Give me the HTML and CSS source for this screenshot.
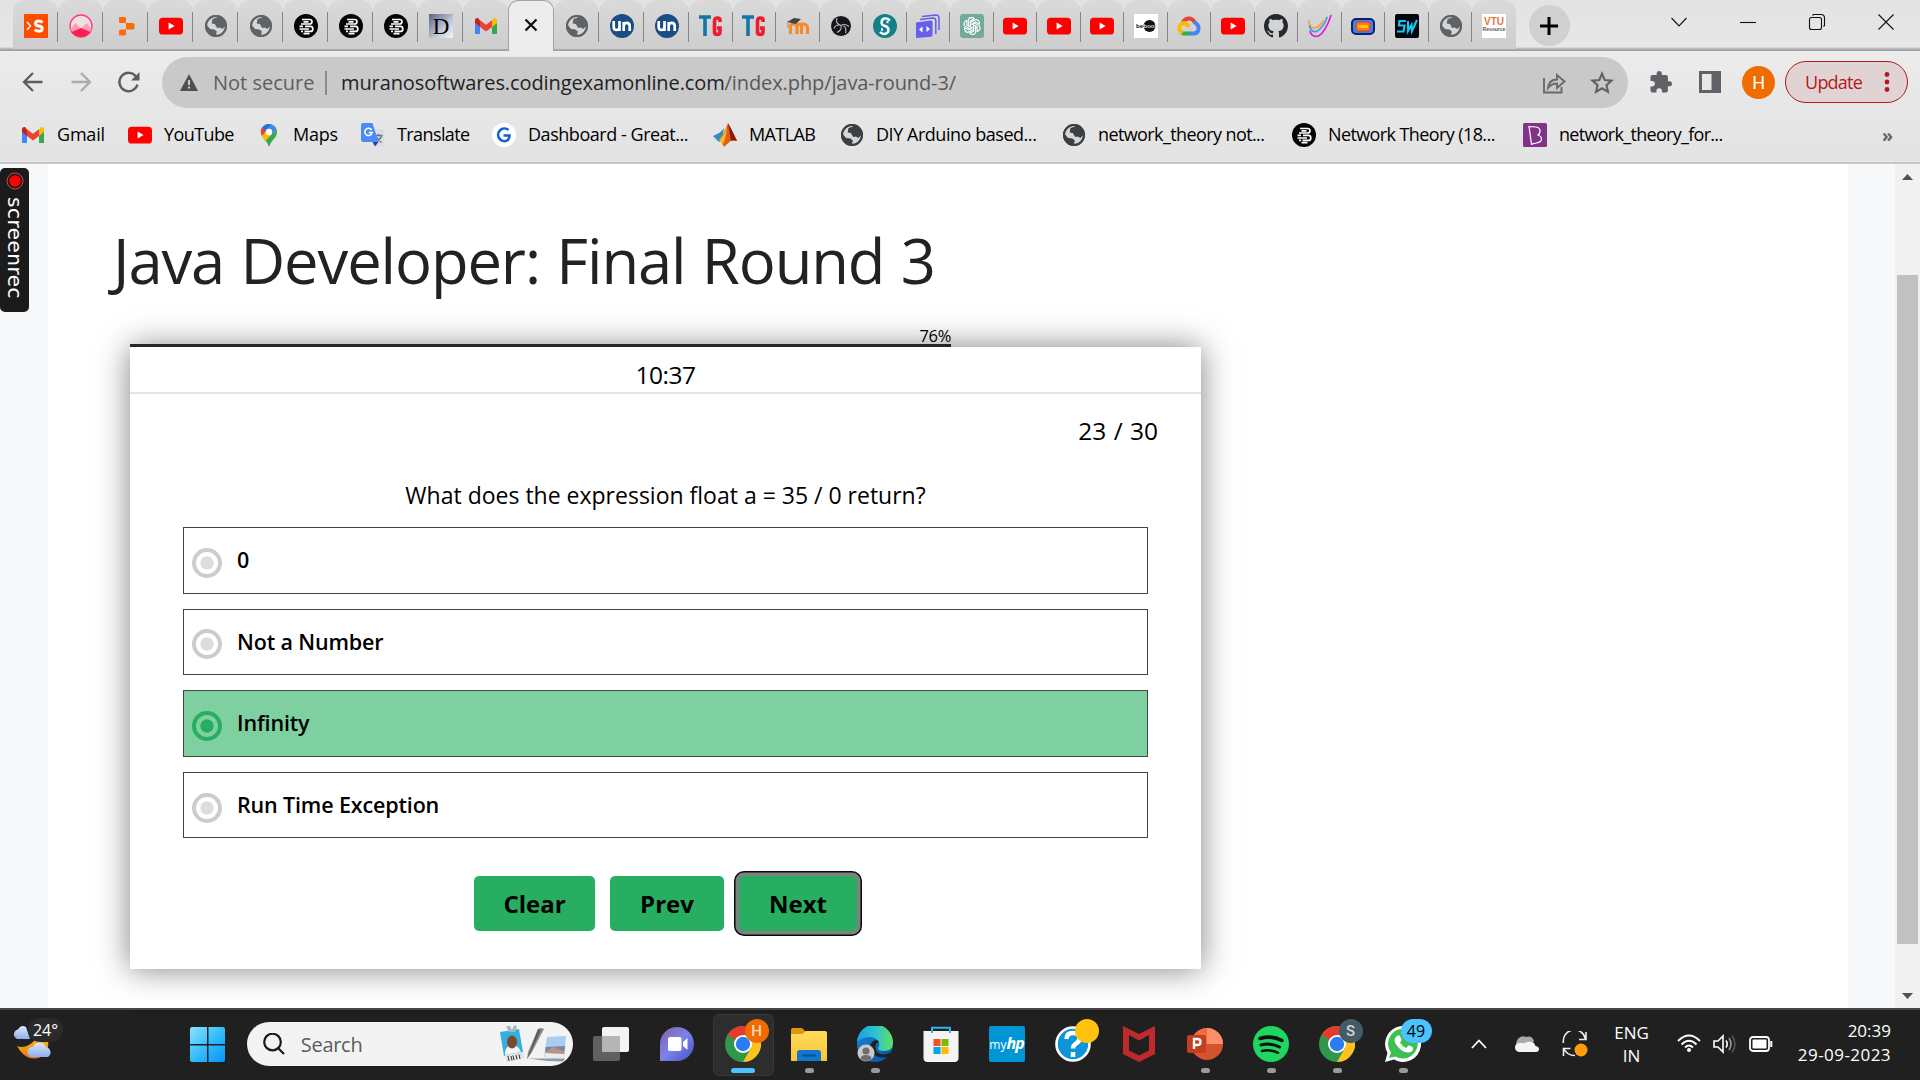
FILE: index.html
```html
<!DOCTYPE html>
<html lang="en">
<head>
<meta charset="utf-8">
<title>Java Developer: Final Round 3</title>
<link rel="stylesheet" href="styles.css">
</head>
<body>
<svg class="defs" aria-hidden="true">
  <defs>
    <linearGradient id="gWin" x1="0" y1="0" x2="1" y2="1"><stop offset="0" stop-color="#8be4ff"/><stop offset=".5" stop-color="#35bdfb"/><stop offset="1" stop-color="#0a93f8"/></linearGradient>
    <linearGradient id="gChat" x1="0" y1="0" x2="1" y2="1"><stop offset="0" stop-color="#8a5d9e"/><stop offset=".5" stop-color="#7b83eb"/><stop offset="1" stop-color="#4b4bc0"/></linearGradient>
    <linearGradient id="gFold" x1="0" y1="0" x2="0" y2="1"><stop offset="0" stop-color="#ffdb5c"/><stop offset="1" stop-color="#f8c436"/></linearGradient>
    <linearGradient id="gEdge" x1="0" y1="0" x2="1" y2="0"><stop offset="0" stop-color="#1b9de2"/><stop offset=".5" stop-color="#2cc4d4"/><stop offset="1" stop-color="#5fe05a"/></linearGradient>
    <linearGradient id="gEdge2" x1="0" y1="0" x2="1" y2="1"><stop offset="0" stop-color="#1689d8"/><stop offset="1" stop-color="#0c4da2"/></linearGradient>
    <linearGradient id="gMoon" x1="0" y1="0" x2="0" y2="1"><stop offset="0" stop-color="#fdb813"/><stop offset="1" stop-color="#e8730c"/></linearGradient>
    <linearGradient id="gCloud" x1="0" y1="0" x2="0" y2="1"><stop offset="0" stop-color="#dbe8fb"/><stop offset="1" stop-color="#8fb0ea"/></linearGradient>
    <linearGradient id="gD" x1="0" y1="0" x2="1" y2="1"><stop offset="0" stop-color="#5c6384"/><stop offset=".6" stop-color="#c3c8d6"/><stop offset="1" stop-color="#f4f5f8"/></linearGradient>
  </defs>
  <symbol id="yt" viewBox="0 0 24 24"><rect y="3.7" width="24" height="16.8" rx="3.6" fill="#f00"/><path d="M9.6 8.6v7l6-3.5z" fill="#fff"/></symbol>
  <symbol id="globe" viewBox="0 0 24 24"><circle cx="12" cy="12" r="11" fill="currentColor"/><path d="M13.2 3.2 9 5.5 8.2 9l3.3.6 1.7 2-.5 2.4 3.2-.6 2.4 1.6 2.6-2.4c.4 3.6-2 7.5-6.5 8.300l-2.600-.3 1.200-2.800-2.500-2.200-4.400-.6-3-3.500c-.2-4.400 3-8.600 8.200-9.200z" fill="#d6d6d6"/><path d="M8.500 5 13 4l2.500 2-1.200 2.700 3.300 1.900-1 2.600-4.300-.4-1.400-2.700-3.200-.5z" fill="currentColor"/><circle cx="12" cy="12" r="10" fill="none" stroke="currentColor" stroke-width="2"/></symbol>
  <symbol id="bars3" viewBox="0 0 24 24"><circle cx="12" cy="12" r="12" fill="#050505"/><path d="M8 5.500h7.500q2.500 0 2.500 2.200T15.500 10H7M9.500 7.800h5M11 12.400h5.500q2.300 0 2.300 2.500t-2.300 2.500H10.500M5.500 12.400H9M5.500 15H15M7 17.400H9M9.500 19.600h6" fill="none" stroke="#fff" stroke-width="1.700"/></symbol>
  <symbol id="gm" viewBox="0 0 24 24"><path d="M1 5.500V20h5v-9z" fill="#4285f4"/><path d="M23 5.500V20h-5v-9z" fill="#34a853"/><path d="M18 6.500 20 4q3-.5 3 3v2l-5 4z" fill="#fbbc04"/><path d="M6 6.500 4 4Q1 3.500 1 7v2l5 4z" fill="#c5221f"/><path d="M6 6.300v6.700l6 4.500 6-4.500V6.300l-6 4.500z" fill="#ea4335"/></symbol>
  <symbol id="un" viewBox="0 0 24 24"><circle cx="12" cy="12" r="12" fill="#1c4c86"/><path d="M3.700 7v6q0 3 2.900 3t2.900-3V7m0 6v4M13.700 17V8m0 4q0-3.200 3-3.200t3 3.200v5" fill="none" stroke="#fff" stroke-width="2.700"/></symbol>
  <symbol id="tg" viewBox="0 0 24 24"><path d="M0 3h12M6 3v19" stroke="#1475a8" stroke-width="3.600" fill="none"/><path d="M21 8V6q0-2-2.700-2T15.500 7v11q0 2.500 2.800 2.500T21 18v-4h-3" stroke="#ee1c2e" stroke-width="3.600" fill="none"/></symbol>
  <symbol id="chrome" viewBox="0 0 36 36"><circle cx="18" cy="18" r="18" fill="#31974b"/><path d="M18 18 2.400 9A18 18 0 0 1 33.600 9H18z" fill="#e33b2e"/><path d="M18 9h15.600A18 18 0 0 1 18 36l8-14z" fill="#fcc31e"/><path d="M2.400 9 10 22.500 18 18z" fill="#31974b"/><circle cx="18" cy="18" r="9" fill="#fff"/><circle cx="18" cy="18" r="7.200" fill="#2c7cf0"/></symbol>
</svg>

<header class="browser">
  <div class="tabstrip">
    <div class="tab"><svg class="fav" viewBox="0 0 24 24"><rect width="24" height="24" fill="#ff4b00"/><path d="m3 8 3.500 4L3 16" fill="none" stroke="#fff" stroke-width="1.500"/><path d="M18.500 8.500Q17 7 14.500 7t-3 2.400q0 2 3.300 2.500 3.500.6 3.500 2.800T15 17.300q-2.500 0-4.200-1.600" fill="none" stroke="#fff" stroke-width="3"/></svg></div>
    <div class="tab"><svg class="fav" viewBox="0 0 24 24"><circle cx="12" cy="12" r="11" fill="#f3dde3" stroke="#ff3d74" stroke-width="1.300"/><path d="m1.500 15 5-6 5.500 6 5.500-6 5 6-3 5.500h-15z" fill="#ff9db5"/><path d="M2.500 18 12 14l9.500 4A11.500 11.500 0 0 1 2.500 18z" fill="#ff1f55"/></svg></div>
    <div class="tab"><svg class="fav" viewBox="0 0 24 24"><path d="M5 3h5.500q1.500 0 1.500 1.500V9H6.500Q5 9 5 7.500zM12 9h7q1.500 0 1.500 1.500v3.500Q20.500 15.500 19 15.500h-7zM5 17q0-1.500 1.500-1.500H12V20q0 1.500-1.500 1.500H5z" fill="#fb6a0c"/></svg></div>
    <div class="tab"><svg class="fav"><use href="#yt"/></svg></div>
    <div class="tab"><svg class="fav grey"><use href="#globe"/></svg></div>
    <div class="tab"><svg class="fav grey"><use href="#globe"/></svg></div>
    <div class="tab"><svg class="fav"><use href="#bars3"/></svg></div>
    <div class="tab"><svg class="fav"><use href="#bars3"/></svg></div>
    <div class="tab"><svg class="fav"><use href="#bars3"/></svg></div>
    <div class="tab"><svg class="fav" viewBox="0 0 24 24"><rect width="24" height="24" fill="url(#gD)"/><text x="12" y="20" text-anchor="middle" class="serif-d">D</text></svg></div>
    <div class="tab last"><svg class="fav"><use href="#gm"/></svg></div>
    <div class="tab active"><svg class="fav" viewBox="0 0 24 24"><path d="m6.500 6.500 11 11m0-11-11 11" stroke="#111" stroke-width="2.300" fill="none"/></svg></div>
    <div class="tab"><svg class="fav grey"><use href="#globe"/></svg></div>
    <div class="tab"><svg class="fav"><use href="#un"/></svg></div>
    <div class="tab"><svg class="fav"><use href="#un"/></svg></div>
    <div class="tab slim"><svg class="fav"><use href="#tg"/></svg></div>
    <div class="tab slim"><svg class="fav"><use href="#tg"/></svg></div>
    <div class="tab slim"><svg class="fav" viewBox="0 0 24 24"><path d="M4.500 20v-7q0-3 3.300-3t3.200 3v7m0-7q0-3 5-3t5.500 3v7M15.500 20v-9" fill="none" stroke="#f58a2c" stroke-width="3.200"/><path d="m1 8 7-4 7 1-5 5z" fill="#444"/><path d="M2 8v6" stroke="#a88b6c"/></svg></div>
    <div class="tab slim"><svg class="fav" viewBox="0 0 24 24"><circle cx="12" cy="12" r="10.500" fill="#16161a" stroke="#dcdcdc"/><path d="M8 4q-2 5.500 4 7.500Q15.500 9 20 12.500M12 11.500q1 5-4 7M14.500 12q3.500 2 2 7M11 11q-4.500-.5-6 3.500" fill="none" stroke="#bbb" stroke-width="1.100"/></svg></div>
    <div class="tab slim"><svg class="fav" viewBox="0 0 24 24"><circle cx="12" cy="12" r="12" fill="#14808a"/><path d="M17 6.500Q14.500 4 11.500 4.500T8.500 9q0 2 3.500 3t3.500 4-3.500 4q-3 .3-5-2M13.500 8h2M8 15.500h2" fill="none" stroke="#fff" stroke-width="2.400"/></svg></div>
    <div class="tab slim"><svg class="fav" viewBox="0 0 24 24"><path d="M6 2.500 20 1q3 0 3 3v12M4 5.500 17 4q2.800 0 2.800 3v13" fill="none" stroke="#655ff0" stroke-width="1.500"/><path d="M0 8.500 15 6.500q1.500 0 1.500 1.500v13q0 1.500-1.500 1.700L0 24z" fill="#655ff0"/><path d="m6.500 12.500-3.500 3 3.500 3zm4-.5 3.500 3-3.500 3z" fill="#fff"/></svg></div>
    <div class="tab slim"><svg class="fav" viewBox="0 0 24 24"><rect width="24" height="24" rx="3" fill="#74aa9c"/><g fill="none" stroke="#fff" stroke-width="1.100"><path id="petal" d="M8.300 12.500V6.800q0-3.200 3.200-3.200 1.800 0 2.700 1.200L10.300 7v6"/><use href="#petal" transform="rotate(60 12 12)"/><use href="#petal" transform="rotate(120 12 12)"/><use href="#petal" transform="rotate(180 12 12)"/><use href="#petal" transform="rotate(240 12 12)"/><use href="#petal" transform="rotate(300 12 12)"/></g></svg></div>
    <div class="tab slim"><svg class="fav"><use href="#yt"/></svg></div>
    <div class="tab slim"><svg class="fav"><use href="#yt"/></svg></div>
    <div class="tab slim"><svg class="fav"><use href="#yt"/></svg></div>
    <div class="tab slim"><svg class="fav" viewBox="0 0 24 24"><rect width="24" height="24" fill="#fff"/><circle cx="15.500" cy="12" r="6" fill="#111"/><text x="2" y="14" class="bebo">be</text><text x="9.500" y="14" class="bebo light">book</text></svg></div>
    <div class="tab slim"><svg class="fav" viewBox="0 0 24 24"><g fill="none" stroke-width="4"><path d="M6 8.500Q8 4.500 12 4.500t6 4.500" stroke="#ea4335"/><path d="M17 8q5 2.500 4.500 7t-5 4.500H12" stroke="#4285f4"/><path d="M13 19.500H7.500q-2 0-3-1" stroke="#34a853"/><path d="M5.500 19q-4-2.500-3-6t5-4l5 3.500" stroke="#fbbc05"/></g></svg></div>
    <div class="tab slim"><svg class="fav"><use href="#yt"/></svg></div>
    <div class="tab slim"><svg class="fav" viewBox="0 0 16 16"><path fill="#24292f" d="M8 0C3.580 0 0 3.580 0 8c0 3.540 2.290 6.530 5.470 7.590.4.070.55-.17.55-.38 0-.19-.01-.82-.01-1.490-2.010.37-2.530-.49-2.690-.94-.09-.23-.48-.94-.82-1.130-.28-.15-.68-.52-.01-.53.63-.01 1.080.58 1.230.82.72 1.210 1.870.87 2.330.66.070-.52.28-.87.51-1.070-1.780-.2-3.640-.89-3.640-3.950 0-.87.31-1.590.82-2.150-.08-.2-.36-1.020.08-2.120 0 0 .67-.21 2.200.82.64-.18 1.320-.27 2-.27s1.360.09 2 .27c1.530-1.040 2.200-.82 2.200-.82.44 1.100.16 1.920.08 2.120.51.56.82 1.270.82 2.150 0 3.070-1.870 3.750-3.650 3.950.29.25.54.73.54 1.480 0 1.070-.01 1.930-.01 2.200 0 .21.15.46.55.38A8.010 8.010 0 0 0 16 8c0-4.420-3.580-8-8-8z"/></svg></div>
    <div class="tab slim"><svg class="fav" viewBox="0 0 24 24"><g fill="none" stroke-width="1.700" stroke-linecap="round"><path d="M1 7q0 7 5 7t9-7" stroke="#f5a623"/><path d="M1.500 12q1.500 6.500 7 5.500Q14.500 15 19 3.500" stroke="#3d9be9"/><path d="M2 17.500q2 6 8.500 4.500Q17.500 18 23 1.500" stroke="#e31bd6"/></g></svg></div>
    <div class="tab slim"><svg class="fav" viewBox="0 0 24 24"><rect x="1" y="5" width="22" height="15" rx="4" fill="#3b82f6" stroke="#0b2265" stroke-width="2"/><rect x="5" y="8" width="14" height="9" rx="2.500" fill="#ff7a1a" stroke="#ee3a10"/><path d="M7 12.500h10" stroke="#fdc60a" stroke-width="3"/></svg></div>
    <div class="tab slim"><svg class="fav" viewBox="0 0 24 24"><rect width="24" height="24" rx="2" fill="#050510"/><path d="M11 7H4.500L4 11.500h5.500L8.500 17.500H2M13 7v10l3.500-6 .5 6 5-11" fill="none" stroke="#12c8ec" stroke-width="2.200"/></svg></div>
    <div class="tab slim"><svg class="fav grey"><use href="#globe"/></svg></div>
    <div class="tab slim last"><svg class="fav" viewBox="0 0 24 24"><rect width="24" height="24" fill="#fff"/><text x="12" y="11" text-anchor="middle" class="vtu">VTU</text><text x="12" y="16.500" text-anchor="middle" class="vtu-sub">Resource</text></svg></div>
    <div class="newtab"><svg viewBox="0 0 24 24"><path d="M12 3v18M3 12h18" stroke="#000" stroke-width="3"/></svg></div>
    <div class="winctl">
      <svg viewBox="0 0 16 16"><path d="m.5 4 7.500 8 7.500-8"/></svg>
      <svg viewBox="0 0 16 16"><path d="M0 8.500h16"/></svg>
      <svg viewBox="0 0 16 16"><rect x=".5" y="3.500" width="12" height="12" rx="2"/><path d="M3.500 1.500 4.500.5H12q3.500 0 3.500 3.500v7.500l-1 1"/></svg>
      <svg viewBox="0 0 16 16"><path d="m.5.5 15 15m0-15-15 15"/></svg>
    </div>
  </div>

  <div class="toolbar">
    <svg class="nav" viewBox="0 0 24 24"><path d="M21.500 12H3m9-9-9 9 9 9" fill="none" stroke="#5a5e62" stroke-width="2.300"/></svg>
    <svg class="nav" viewBox="0 0 24 24"><path d="M2.500 12H21m-9-9 9 9-9 9" fill="none" stroke="#a9abad" stroke-width="2.300"/></svg>
    <svg class="nav" viewBox="0 0 24 24"><path d="M20.500 14.500A9.200 9.200 0 1 1 19 6.500" fill="none" stroke="#5a5e62" stroke-width="2.400"/><path d="M22.500 2v8.500H14z" fill="#5a5e62"/></svg>
    <div class="omnibox">
      <svg class="warn" viewBox="0 0 18 17"><path d="M9 0 18 17H0z" fill="#4c4f53"/><path d="M9 6v5m0 1.500v2" stroke="#ccc" stroke-width="2"/></svg>
      <span class="insecure">Not secure</span>
      <span class="url">muranosoftwares.codingexamonline.com<span class="path">/index.php/java-round-3/</span></span>
      <svg class="share" viewBox="0 0 24 24"><g fill="none" stroke="#66696d" stroke-width="1.900"><path d="M2 7v14.500h17.500V16"/><path d="M6 17q1-8.500 9-8.500V4l7.500 6.500-7.500 6.500v-4.500Q9.500 12.500 6 17z"/></g></svg>
      <svg class="star" viewBox="0 0 24 24"><path d="m12 3.500 2.500 5.700 6.300.6-4.700 4.200 1.400 6.200-5.500-3.300-5.500 3.300 1.400-6.200-4.700-4.200 6.300-.6z" fill="none" stroke="#5f6368" stroke-width="2"/></svg>
    </div>
    <svg class="puzzle" viewBox="1.500 1 21.500 21.500"><path fill="#5f6368" d="M20.500 11H19V7c0-1.100-.9-2-2-2h-4V3.500a2.500 2.500 0 0 0-5 0V5H4c-1.100 0-2 .9-2 2v3.800h1.500a2.700 2.700 0 0 1 0 5.400H2V20c0 1.100.9 2 2 2h3.800v-1.500a2.700 2.700 0 0 1 5.400 0V22H17c1.100 0 2-.9 2-2v-4h1.500a2.500 2.500 0 0 0 0-5z"/></svg>
    <svg class="panel" viewBox="0 0 22 22"><path d="M0 0h22v22H0zM3 3v16h9.500V3z" fill="#5f6368" fill-rule="evenodd"/></svg>
    <span class="avatar">H</span>
    <div class="update"><span>Update</span><svg viewBox="0 0 6 20"><circle cx="3" cy="2.500" r="2.400"/><circle cx="3" cy="10" r="2.400"/><circle cx="3" cy="17.500" r="2.400"/></svg></div>
  </div>

  <nav class="bookmarks">
    <a><svg><use href="#gm"/></svg><span>Gmail</span></a>
    <a><svg><use href="#yt"/></svg><span class="tight">YouTube</span></a>
    <a><svg viewBox="0 0 24 24"><path d="M4 9a8 8 0 0 1 16 0q0 4-4 8-3 3-4 7-1-4-4-7-4-4-4-8z" fill="#34a853"/><path d="M5 5a8 8 0 0 1 9.500-3.600L8 9z" fill="#1a73e8"/><path d="M5 4.500 9 8 5 13Q2.500 8 5 4.500z" fill="#ea4335"/><path d="M14.500 1.400Q18 2.500 19.500 6L8 18.500 5 13z" fill="#fbbc04"/><path d="M14.500 1.400Q18 2.500 19.300 6L15 11 9 6.500z" fill="#4285f4"/><circle cx="12" cy="9" r="3.200" fill="#fff"/></svg><span>Maps</span></a>
    <a><svg viewBox="0 0 24 24"><path d="M9 6h12q2 0 2 2v14q0 1.500-2 1.500h-8z" fill="#d9dce0"/><path d="M13.500 12.500h8m-4-1.500v1.500m3 0q-1 4-6 6.500m1-5q2 3.500 5 5.500" fill="none" stroke="#5f7a8a" stroke-width="1.400"/><path d="M2 0h9.500l6 19H2q-2 0-2-2V2q0-2 2-2z" fill="#4c8bf5"/><path d="M11.500 19h6L14 23.500z" fill="#2a3fa8"/><path d="M10.500 7A3.600 3.600 0 1 0 11 9.500H7.800" fill="none" stroke="#fff" stroke-width="1.600"/></svg><span class="tight">Translate</span></a>
    <a><svg viewBox="0 0 24 24"><circle cx="12" cy="12" r="12" fill="#fff"/><path d="M16.500 7A6.300 6.300 0 1 0 16 17q1.500-2 1.500-4.500h-6" fill="none" stroke="#145fd7" stroke-width="2.600"/></svg><span class="snug">Dashboard - Great...</span></a>
    <a><svg viewBox="0 0 24 24"><path d="m0 13 6-3q3-2 5-5l-2 12-3 2z" fill="#2f8fc0"/><path d="M6 17q5-6 9-17 5 9 9 18-4-1-6 0t-7 6l-2-4z" fill="#e0600c"/><path d="M15 0q5 9 9 18-4-1.500-6 0Z" fill="#8c1a10"/><path d="M6 17q4-3 8-13-1 11-4 17z" fill="#fbb62c"/></svg><span class="tight">MATLAB</span></a>
    <a><svg class="dark"><use href="#globe"/></svg><span class="snug">DIY Arduino based...</span></a>
    <a><svg class="dark"><use href="#globe"/></svg><span class="tight">network_theory not...</span></a>
    <a><svg><use href="#bars3"/></svg><span class="tight">Network Theory (18...</span></a>
    <a><svg viewBox="0 0 24 24"><rect width="24" height="24" rx="1.500" fill="#813388"/><path d="M6 3.500 13 4q4 .5 4 4t-2.500 4q4 1 4 4t-5 4l-5 1.200zL8.500 21" fill="none" stroke="#fff" stroke-width="1.200"/></svg><span class="tightest">network_theory_for...</span></a>
    <b class="more">»</b>
  </nav>
</header>

<main class="viewport">
  <aside class="gutter">
    <div class="recorder"><svg viewBox="0 0 18 22"><circle cx="9" cy="11" r="8" fill="none" stroke="#e04040"/><circle cx="9" cy="11" r="5.700" fill="#f00"/></svg><span>screenrec</span></div>
  </aside>
  <section class="page">
    <h1>Java Developer: Final Round 3</h1>
    <div class="quiz">
      <div class="progress" style="width:821px"><span>76%</span></div>
      <div class="timer">10:37</div>
      <div class="count">23 / 30</div>
      <p class="question">What does the expression float a = 35 / 0 return?</p>
      <ul class="options">
        <li><i></i><span>0</span></li>
        <li><i></i><span>Not a Number</span></li>
        <li class="picked"><i></i><span>Infinity</span></li>
        <li><i></i><span>Run Time Exception</span></li>
      </ul>
      <div class="actions">
        <button class="clear">Clear</button><button class="prev">Prev</button><button class="next">Next</button>
      </div>
    </div>
  </section>
  <aside class="gutter right"></aside>
  <div class="scrollbar"><svg viewBox="0 0 11 6"><path d="M5.500 0 11 6H0z"/></svg><div class="thumb"></div><svg viewBox="0 0 11 6"><path d="M0 0h11L5.500 6z"/></svg></div>
</main>

<footer class="taskbar">
  <div class="weather">
    <svg viewBox="0 0 38 42"><path d="M3 17a5 5 0 0 1 1-9.500Q7 2 12 5l4 12z" fill="url(#gCloud)"/><path d="M3 24q9 4 19-7h12q2 12-7 18-15 6-24-11z" fill="url(#gMoon)"/><path d="M18 35a5 5 0 0 1 1-10 7 7 0 0 1 13 0 5.500 5.500 0 0 1 2 10z" fill="url(#gCloud)"/></svg>
    <span>24°</span>
  </div>
  <svg class="start" viewBox="0 0 35 35"><path d="M2 0h15v17H0V2q0-2 2-2zM18.500 0H33q2 0 2 2v15H18.500zM0 18.500h17V35H2q-2 0-2-2zM18.500 18.500H35V33q0 2-2 2H18.500z" fill="url(#gWin)"/></svg>
  <div class="search">
    <svg class="lens" viewBox="0 0 22 22"><circle cx="9.500" cy="9" r="8.300"/><path d="m15.500 15.500 5.500 5.500"/></svg>
    <span>Search</span>
    <svg class="art" viewBox="0 0 66 38"><path d="m0 7 19-3 4 23-19 4z" fill="#35aee0"/><path d="M9 7 6 1h4l2 4 2-5 3 1-2 6z" fill="#9dbac6"/><path d="M5 27q1-6 7-6.500t8 4.500l1 2-16 3z" fill="#f4f4f4"/><ellipse cx="12" cy="17" rx="5" ry="6.500" fill="#7a4a2c"/><path d="m5 30 18-3 1 6-18 4z" fill="#dde4ea"/><path d="m8 31 1 5m2-5 1 4.500m1-5 1 4.500m2-5 1 4.500m2-5 1 4.500" stroke="#333"/><path d="m28 27 10-23q3-2 6 0L32 27l-5 7z" fill="#8b9095"/><path d="m38 4 3 1-11 24-3 5z" fill="#5a5e62"/><path d="M28 33.500h37l-2 3q-18 0-35-3z" fill="#8f98ac"/><path d="m47 12 19-1-2 22-20-1z" fill="#a8cdf0"/><path d="m45.500 22 19.500-1-.8 8-19-1z" fill="#7387ae"/><path d="m45 27 8-5 11 4v4l-19-1z" fill="#b99183"/><path d="m45 28 19 1-.3 4-19-1z" fill="#e8edf4"/></svg>
  </div>
  <div class="apps">
    <div class="app"><svg viewBox="0 0 36 36"><rect y="10" width="27" height="25" rx="2" fill="#606060"/><rect x="9" y="1" width="27" height="25" rx="2" fill="#f4f4f4"/><path d="M9 10h18v16H11q-2 0-2-2z" fill="#b5b5b5"/></svg></div>
    <div class="app"><svg viewBox="0 0 36 36"><path d="M1 35V18a17 17 0 1 1 17 17z" fill="url(#gChat)"/><rect x="9" y="11" width="13.500" height="14" rx="2" fill="#fff"/><path d="m24 16 4.500-4v12L24 20z" fill="#fff"/></svg></div>
    <div class="app current"><svg><use href="#chrome"/></svg><em class="badge h">H</em></div>
    <div class="app open"><svg viewBox="0 0 36 36"><path d="M0 4q0-2 2-2h9l4 4v4H0z" fill="#dd9a08"/><path d="M0 8h11l4-3h19q2 0 2 2v28H0z" fill="url(#gFold)"/><path d="M6 35v-8q0-3 3-3h18q3 0 3 3v8z" fill="#1277cf"/><path d="M11 29.500h14" stroke="#0b4b93" stroke-width="2"/></svg></div>
    <div class="app open"><svg viewBox="0 0 36 36"><circle cx="18" cy="18" r="18" fill="url(#gEdge2)"/><path d="M0 16A18 18 0 0 1 36 17q0 8-9 8-6 0-6-3 2-2 1-5-2-6-9-6-8 0-13 5z" fill="url(#gEdge)"/><path d="M22 16q-5 2-3 8 3 7 14 3l2-1-1 4q-8 3-15 0-6-3-6-9 1-7 7-7z" fill="#202020"/><circle cx="9" cy="27" r="8.500" fill="#c9c9c9"/><circle cx="9" cy="25" r="3.600" fill="#6e6e6e"/><path d="M3.500 33q0-4 5.500-4t5.500 4q-5 4-11 0z" fill="#6e6e6e"/></svg></div>
    <div class="app"><svg viewBox="0 0 36 36"><path d="M.5 5h35v27q0 4-4 4h-27q-4 0-4-4z" fill="#f4f4f4"/><path d="M9 7V1.800h18V7" fill="none" stroke="#2bb4f4" stroke-width="2"/><path d="M10.500 13h7v7h-7z" fill="#f25022"/><path d="M18.500 13h7v7h-7z" fill="#7fba00"/><path d="M10.500 21h7v7h-7z" fill="#00a4ef"/><path d="M18.500 21h7v7h-7z" fill="#ffb900"/></svg></div>
    <div class="app"><span class="myhp">my<b>hp</b></span></div>
    <div class="app"><svg viewBox="0 0 36 36"><circle cx="18" cy="18" r="16.500" fill="#0c96d8" stroke="#fff" stroke-width="2.600"/><path d="M11.500 13q0-6 6.500-6t6.500 5.500q0 3-3.500 5-3 2-3 5M18 26v5" fill="none" stroke="#fff" stroke-width="4.500"/></svg><em class="badge dot"></em></div>
    <div class="app"><svg viewBox="0 0 36 36"><path d="M2 0 18 8 34 0v28L18 36 2 28zM8 9v15.500l10 5 10-5V9l-10 5.500z" fill="#c02a2c" fill-rule="evenodd"/></svg></div>
    <div class="app open"><svg viewBox="0 0 36 36"><circle cx="20" cy="18" r="16" fill="#d35230"/><path d="M20 2a16 16 0 0 1 16 16H20z" fill="#ff8f6b"/><path d="M20 2v16H4A16 16 0 0 1 20 2z" fill="#ed6c47"/><rect y="9" width="19" height="18" rx="2" fill="#c43e1c"/><path d="M7 23V13h3.500q3 0 3 3t-3 3H7" fill="none" stroke="#fff" stroke-width="2.400"/></svg></div>
    <div class="app open"><svg viewBox="0 0 36 36"><circle cx="18" cy="18" r="18" fill="#1ed760"/><g fill="none" stroke="#101010" stroke-linecap="round"><path d="M7 12.500q12-3.500 22 2" stroke-width="3.600"/><path d="M8 19q10-2.500 18.500 2" stroke-width="3"/><path d="M9 25q9-2 16 1.800" stroke-width="2.500"/></g></svg></div>
    <div class="app open"><svg><use href="#chrome"/></svg><em class="badge s">S</em></div>
    <div class="app open"><svg viewBox="0 0 36 36"><path d="M0 36 2.500 27A18 18 0 1 1 9 33.500z" fill="#fff"/><path d="M4 32 6 26.500A14.800 14.800 0 1 1 10.500 30.500z" fill="#3cc052"/><path d="M12 10q2-1.500 3 0l1.500 3.500q.3 1-1.500 3 2 3.700 6 5.500l2-2q.7-.8 1.600-.4l3.400 1.800q.7 4.600-4.500 5-5 0-9.500-4.500T9.500 14q.5-3 2.500-4z" fill="#fff"/></svg><em class="badge count49">49</em></div>
  </div>
  <div class="tray">
    <svg class="chev" viewBox="0 0 16 10"><path d="m1 9 7-7.500L15 9" fill="none" stroke="#fff" stroke-width="1.800"/></svg>
    <svg class="cloud" viewBox="0 0 24 16"><path d="M3 12A7 7 0 0 1 11 1q6-2 8 4l-6 9z" fill="#a9a9a9"/><path d="M4 16a4.500 4.500 0 0 1 1-9l5 0q3-2 7-1 3 1 3.500 4 3.500.5 3.500 3t-3 3z" fill="#f4f4f4"/></svg>
    <svg class="sync" viewBox="0 0 26 26"><g fill="none" stroke="#eee" stroke-width="1.600"><path d="M1.500 12A11 11 0 0 1 23.500 8M24 1v7.500h-7"/><path d="M1.500 25v-7.500h7M2 18q3 6.500 11 6.500"/></g><circle cx="19" cy="19" r="6.500" fill="#ff9d0a"/></svg>
    <div class="lang"><span>ENG</span><span>IN</span></div>
    <svg class="wifi" viewBox="0 0 24 18"><g fill="none" stroke="#fff" stroke-width="1.800"><path d="M1 7q11-11 22 0"/><path d="M4.500 10.500q7.500-7.500 15 0"/><path d="M8 13.500q4-4 8 0"/></g><circle cx="12" cy="16" r="2" fill="#fff"/></svg>
    <svg class="vol" viewBox="0 0 24 20"><path d="M1 7h4l5-5v16l-5-5H1z" fill="none" stroke="#fff" stroke-width="1.600"/><g fill="none" stroke-width="1.600"><path d="M13 6.500q2.500 3.500 0 7" stroke="#fff"/><path d="M16 4q4 6 0 12" stroke="#999"/><path d="M19 1.500q6 8.500 0 17" stroke="#555"/></g></svg>
    <svg class="batt" viewBox="0 0 24 16"><rect x="1" y="1" width="19" height="14" rx="3" fill="none" stroke="#fff" stroke-width="1.800"/><rect x="3.500" y="3.500" width="14" height="9" rx="1" fill="#fff"/><path d="M22.300 5v6" stroke="#fff" stroke-width="2"/></svg>
    <div class="clock"><span class="time">20:39</span><span class="date">29-09-2023</span></div>
  </div>
</footer>
</body>
</html>
```

FILE: styles.css
```css
* { box-sizing: border-box; }
body {
  margin: 0;
  width: 1920px;
  height: 1080px;
  overflow: hidden;
  display: flex;
  flex-direction: column;
  font-family: "Open Sans", "Noto Sans", sans-serif;
  color: #000;
}
svg { display: block; flex: none; }
span { white-space: nowrap; }
.defs { position: absolute; width: 0; height: 0; }

/* Browser chrome */
.browser { height: 164px; flex: none; background: #e6e6e6; border-bottom: 2px solid #c5c6c7; }
.tabstrip {
  display: flex;
  height: 51px;
  padding-left: 13px;
  background: linear-gradient(#e3e3e3, #e7e7e7 47px, #c8c8c8 48px, #a0a0a0 50px);
}
.tab {
  position: relative;
  width: 45px;
  height: 49px;
  padding-top: 14px;
  display: flex;
  justify-content: center;
  background: linear-gradient(#dadada, #cdcdcd);
  border-radius: 12px 12px 0 0;
}
.tab.slim { width: 43.530px; }
.tab:not(.last):not(.active)::after {
  content: "";
  position: absolute;
  right: -1px;
  top: 12px;
  width: 2px;
  height: 30px;
  background: #858585;
}
.tab.active {
  width: 46px;
  height: 51px;
  padding-top: 11.500px;
  background: #ededed;
  border: 1.500px solid #a3a3a3;
  border-bottom: 0;
  border-radius: 10px 10px 0 0;
}
.fav { width: 24px; height: 24px; }
.grey { color: #5f6368; }
.serif-d { font: 23px "Liberation Serif", serif; fill: #000; }
.bebo { font: bold 6px "Liberation Sans", sans-serif; fill: #111; }
.light { fill: #ddd; }
.vtu { font: bold 10px "Liberation Sans", sans-serif; fill: #e07b3c; }
.vtu-sub { font: bold 5px "Liberation Sans", sans-serif; fill: #555; }
.newtab {
  width: 41px;
  height: 41px;
  margin: 5px 0 0 13px;
  border-radius: 50%;
  background: #d0d0d0;
  display: flex;
  align-items: center;
  justify-content: center;
}
.newtab svg { width: 24px; height: 24px; }
.winctl { display: flex; gap: 53px; margin-left: 101px; padding-top: 14px; }
.winctl svg { width: 16px; height: 16px; fill: none; stroke: #111; stroke-width: 1.100; overflow: visible; }

.toolbar {
  height: 57px;
  padding: 6px 12px 0 21px;
  display: flex;
  align-items: center;
  background: linear-gradient(#ececec, #e6e6e6);
}
.nav { width: 24px; height: 24px; margin-right: 24px; }
.nav, .puzzle, .panel, .avatar, .update { margin-top: -1px; }
.omnibox {
  width: 1467px;
  height: 51px;
  margin-left: -3px;
  padding-left: 18px;
  border-radius: 26px;
  background: #c9c9c9;
  display: flex;
  align-items: center;
}
.warn { width: 18px; height: 17px; margin-right: 15px; }
.insecure { width: 114px; font-size: 20px; color: #5c5f63; border-right: 2px solid #8b8b8b; line-height: 24px; }
.url { margin-left: 14px; font-size: 20px; width: 1201px; color: #202124; letter-spacing: -.1px; }
.path { color: #56595d; }
.share { width: 24px; height: 24px; margin-right: 23px; }
.star { width: 26px; height: 26px; }
.puzzle { width: 22px; height: 22px; margin-left: 22px; }
.panel { width: 22px; height: 22px; margin-left: 27px; }
.avatar {
  width: 33px;
  height: 33px;
  margin-left: 21px;
  border-radius: 50%;
  background: #f06c00;
  color: #fff;
  font: 18px/33px Roboto, sans-serif;
  text-align: center;
}
.update {
  width: 123px;
  height: 42px;
  margin-left: 10px;
  padding: 0 17px 0 19px;
  border: 1.500px solid #b3191c;
  border-radius: 21px;
  background: #e1d3d3;
  color: #b3191c;
  font-size: 18px;
  letter-spacing: -.8px;
  display: flex;
  align-items: center;
  justify-content: space-between;
}
.update svg { width: 6px; height: 20px; fill: #b3191c; }
.bookmarks {
  height: 53px;
  padding-left: 21px;
  display: grid;
  grid-template-columns: 107px 129px 104px 131px 221px 127px 222px 230px 231px 339px auto;
  align-items: center;
  background: linear-gradient(#e7e7e7, #e3e3e3);
  font-size: 18px;
  letter-spacing: -.2px;
}
.bookmarks a { display: flex; align-items: center; gap: 12px; }
.bookmarks span { margin-top: -1px; }
.bookmarks svg { width: 24px; height: 24px; }
.snug { letter-spacing: -.46px; }
.tight { letter-spacing: -.6px; }
.tightest { letter-spacing: -.7px; }
.dark { color: #3c4043; }
.more { color: #5f6368; font-size: 18px; padding-left: 20px; }

/* Page */
.viewport { height: 844px; display: flex; background: #fff; }
.gutter { width: 48px; padding-top: 4px; background: #f7f8fa; }
.gutter.right { width: 47px; }
.recorder {
  width: 29px;
  height: 144px;
  padding-top: 1.500px;
  border-radius: 5px;
  background: #1b1b1b;
  color: #fff;
  display: flex;
  flex-direction: column;
  align-items: center;
}
.recorder svg { width: 18px; height: 22px; }
.recorder span { margin-top: 5px; writing-mode: vertical-rl; font: 20px/24px "DejaVu Sans", sans-serif; letter-spacing: .5px; }
.page { width: 1800px; padding: 52px 0 0 65px; }
h1 {
  margin: 0;
  font-size: 61.500px;
  line-height: 88px;
  font-weight: 400;
  color: #222;
  letter-spacing: -1.100px;
  word-spacing: 1.500px;
  white-space: nowrap;
}
.quiz {
  position: relative;
  width: 1071px;
  height: 622px;
  margin: 43px 0 0 17px;
  background: #fff;
  box-shadow: 0 0 30px rgba(0, 0, 0, .5);
}
.progress {
  position: absolute;
  left: 0;
  bottom: 100%;
  border-bottom: 3px solid #262729;
  text-align: right;
  font-size: 16.500px;
  letter-spacing: -.3px;
  line-height: 16px;
}
.timer { height: 47px; border-bottom: 2px solid #e5e5e5; text-align: center; font-size: 24.500px; line-height: 56px; letter-spacing: -.5px; }
.count { height: 76px; padding-right: 43px; text-align: right; font-size: 24.500px; line-height: 73px; word-spacing: 1px; }
.question { margin: 0; height: 57px; text-align: center; font-size: 23px; line-height: 51px; }
.options { list-style: none; margin: 0; padding: 0 53px; display: grid; gap: 15px; }
.options li {
  height: 66.600px;
  padding-left: 8px;
  border: 1px solid #444;
  display: flex;
  align-items: center;
  gap: 15px;
  font-size: 21.500px;
  font-weight: 600;
  letter-spacing: -.15px;
}
.options span { margin-top: -1px; }
.options i {
  width: 30px;
  height: 30px;
  margin-top: 5px;
  border: 4px solid #ccc;
  border-radius: 50%;
  background: radial-gradient(circle, #ddd 6.300px, transparent 7px);
}
.options .picked { background: #7ed0a1; }
.picked i { border-color: #27ae60; background: radial-gradient(circle, #27ae60 6.300px, transparent 7px); }
.actions { display: flex; gap: 15px; padding: 37.500px 0 0 344px; }
.actions button {
  height: 55px;
  padding: 0;
  border: 0;
  border-radius: 5px;
  background: #28ae61;
  font: 700 24px "Open Sans", sans-serif;
  color: #000;
}
.clear { width: 121px; }
.prev { width: 114px; }
.next { width: 118px; box-shadow: 0 0 0 3.500px #808080, 0 0 0 5px #0a0a0a; }
.scrollbar { width: 25px; padding-top: 10px; background: #f1f1f1; display: flex; flex-direction: column; align-items: center; }
.scrollbar svg { width: 11px; height: 6px; fill: #505050; }
.thumb { width: 21px; height: 669px; margin: 95px 0 49px; background: #c1c1c1; }

/* Taskbar */
.taskbar { height: 72px; background: #202020; border-top: 2px solid #464646; color: #fff; display: flex; }
.weather { position: relative; width: 190px; padding: 12px 0 0 14px; }
.weather svg { width: 38px; height: 42px; }
.weather span {
  position: absolute;
  left: 28px;
  top: 8px;
  width: 35px;
  height: 24px;
  border-radius: 12px;
  background: #2b2b2b;
  font-size: 16px;
  line-height: 24px;
  text-align: center;
}
.start { width: 35px; height: 35px; margin: 17px 22px 0 0; }
.search { width: 326px; height: 44px; margin-top: 12px; padding: 0 7px 0 16px; border-radius: 22px; background: #f3f3f3; display: flex; align-items: center; color: #5c5c5c; font-size: 20px; }
.lens { width: 22px; height: 22px; fill: none; stroke: #1a1a1a; stroke-width: 2.200; }
.search span { margin-left: 16px; flex: 1; letter-spacing: -.3px; }
.art { width: 66px; height: 38px; }
.apps { display: flex; margin-left: 5px; }
.app { position: relative; width: 66px; height: 70px; padding: 16px 15px 0; }
.app svg { width: 36px; height: 36px; }
.app.open::after, .app.current::after {
  content: "";
  position: absolute;
  left: 29px;
  top: 58px;
  width: 9px;
  height: 5px;
  border-radius: 3px;
  background: #9a9a9a;
}
.app.current::after { left: 21px; width: 24px; background: #4cc2ff; }
.app.current::before {
  content: "";
  position: absolute;
  left: 3px;
  top: 4px;
  width: 59px;
  height: 60px;
  border-radius: 6px;
  background: #2d2d2d;
  border: 1px solid #383838;
}
.app.current svg { position: relative; }
.badge { position: absolute; left: 35px; top: 9px; width: 24px; height: 24px; border-radius: 12px; font: 500 15px/24px Roboto, sans-serif; text-align: center; }
.h { background: #f06c00; color: #fbd9bf; }
.dot { background: #ffc20e; }
.s { background: #455a64; color: #cfd8dc; }
.count49 { left: 31px; width: 31px; background: #4cc2ff; color: #000; font: 16px/24px "Open Sans", sans-serif; }
.myhp { display: block; width: 36px; height: 36px; border-radius: 2px; background: #0096d6; text-align: center; font: 12px/35px "Open Sans", sans-serif; }
.myhp b { font-style: italic; font-size: 16px; letter-spacing: -1px; }
.tray { margin-left: auto; width: 485px; display: flex; align-items: flex-start; }
.tray svg { margin-top: 26px; }
.tray .chev { width: 16px; height: 10px; margin: 29px 28px 0 35px; }
.tray .cloud { width: 24px; height: 16px; }
.tray .sync { width: 26px; height: 26px; margin: 21px 26px 0 23px; }
.lang { width: 36px; margin: 11px 27px 0 0; display: flex; flex-direction: column; align-items: center; font-size: 17px; line-height: 23px; }
.tray .wifi { width: 24px; height: 18px; margin-top: 24px; }
.tray .vol { width: 24px; height: 20px; margin: 24px 12px 0; }
.tray .batt { width: 24px; height: 16px; }
.clock { flex: 1; padding: 9px 29px 0 0; display: flex; flex-direction: column; align-items: flex-end; font-size: 17px; line-height: 24px; }
.date { letter-spacing: .45px; }
```
